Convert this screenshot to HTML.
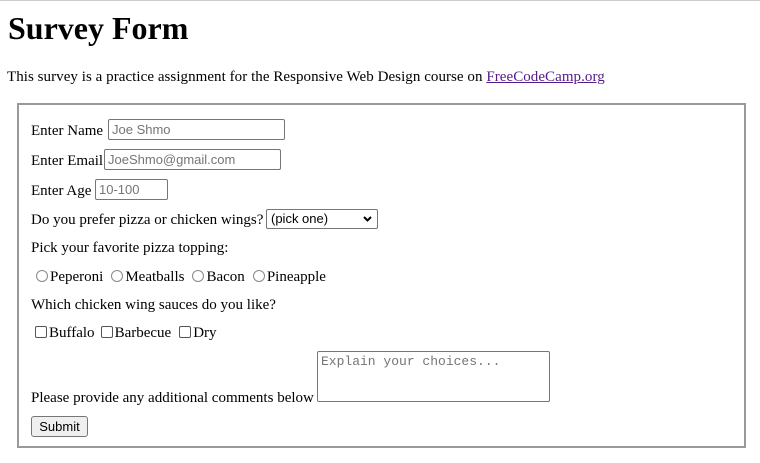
<!DOCTYPE html>
<html><head><style>
body{margin:0;width:760px;height:463px;overflow:hidden;font-family:"Liberation Serif",serif;font-size:15px;color:#000;background:#fff;position:relative}
.a{position:absolute;white-space:nowrap;line-height:18px}
.rb{display:inline-block;width:12px;height:12px;border:1px solid #888;border-radius:50%;vertical-align:-1px;margin-right:2px;box-sizing:border-box}
.cb{display:inline-block;width:12px;height:12px;border:1px solid #555;border-radius:2px;vertical-align:-1px;margin-right:2px;box-sizing:border-box}
.g{display:inline-block;width:8px}
</style></head><body>
<div style="position:absolute;left:0;top:0;width:760px;height:1px;background:#ccc"></div>
<div class="a" style="left:8px;top:10px;font-size:32px;font-weight:bold;line-height:36px">Survey Form</div>
<div class="a" style="left:7px;top:68px;letter-spacing:0.05px">This survey is a practice assignment for the Responsive Web Design course on <span style="color:#551a8b;text-decoration:underline">FreeCodeCamp.org</span></div>
<div style="position:absolute;left:17px;top:103px;width:729px;height:345px;box-sizing:border-box;border:2px solid #999"></div>
<div class="a" style="left:31px;top:122px">Enter Name</div>
<div style="position:absolute;left:108px;top:119px;width:177px;height:21px;border:1px solid #767676;border-radius:2px;box-sizing:border-box;font:13px 'Liberation Sans',sans-serif;color:#757575;padding:2px 3px">Joe Shmo</div>
<div class="a" style="left:31px;top:152px">Enter Email</div>
<div style="position:absolute;left:104px;top:149px;width:177px;height:21px;border:1px solid #767676;border-radius:2px;box-sizing:border-box;font:13px 'Liberation Sans',sans-serif;color:#757575;padding:2px 3px">JoeShmo@gmail.com</div>
<div class="a" style="left:31px;top:182px">Enter Age</div>
<div style="position:absolute;left:95px;top:179px;width:73px;height:21px;border:1px solid #767676;border-radius:2px;box-sizing:border-box;font:13px 'Liberation Sans',sans-serif;color:#757575;padding:2px 3px">10-100</div>
<div class="a" style="left:31px;top:211px">Do you prefer pizza or chicken wings?</div>
<div style="position:absolute;left:266px;top:209px;width:112px;height:20px;border:1px solid #767676;border-radius:2px;box-sizing:border-box;font:13px 'Liberation Sans',sans-serif;color:#000;padding:1px 4px">(pick one)<svg style="position:absolute;right:5px;top:6px" width="9" height="6" viewBox="0 0 9 6"><path d="M1 1L4.5 4.5L8 1" stroke="#000" stroke-width="2" fill="none"/></svg></div>
<div class="a" style="left:31px;top:239px">Pick your favorite pizza topping:</div>
<div class="a" style="left:36px;top:268px"><span class="rb"></span>Peperoni<span class="g"></span><span class="rb"></span>Meatballs<span class="g"></span><span class="rb"></span>Bacon<span class="g"></span><span class="rb"></span>Pineapple</div>
<div class="a" style="left:31px;top:296px">Which chicken wing sauces do you like?</div>
<div class="a" style="left:35px;top:324px"><span class="cb"></span>Buffalo<span class="g" style="width:6px"></span><span class="cb"></span>Barbecue<span class="g"></span><span class="cb"></span>Dry</div>
<div style="position:absolute;left:317px;top:351px;width:233px;height:51px;border:1px solid #767676;border-radius:2px;box-sizing:border-box;font:13px 'Liberation Mono',monospace;color:#757575;padding:2px 3px">Explain your choices...</div>
<div class="a" style="left:31px;top:389px">Please provide any additional comments below</div>
<div style="position:absolute;left:31px;top:416px;width:57px;height:21px;border:1px solid #767676;border-radius:3px;box-sizing:border-box;background:#efefef;font:13px 'Liberation Sans',sans-serif;text-align:center;line-height:19px">Submit</div>
</body></html>
